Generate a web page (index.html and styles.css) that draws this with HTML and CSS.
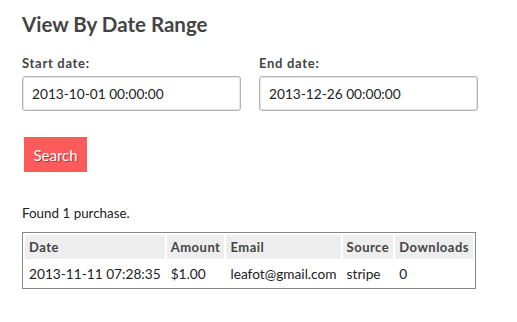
FILE: index.html
```html
<!DOCTYPE html>
<html lang="en">
<head>
  <meta charset="UTF-8" />
  <title>View By Date Range</title>
  <link rel="stylesheet" href="styles.css">
</head>
<body>
  <div class="page">
    <h1>View By Date Range</h1>
    <form class="range-form">
      <div class="fields">
        <div class="field">
          <label for="start">Start date:</label>
          <input type="text" id="start" value="2013-10-01 00:00:00" />
        </div>
        <div class="field">
          <label for="end">End date:</label>
          <input type="text" id="end" value="2013-12-26 00:00:00" />
        </div>
      </div>
      <button type="button" class="search">Search</button>
    </form>

    <p class="found">Found 1 purchase.</p>

    <table class="purchases">
      <thead>
        <tr>
          <th>Date</th>
          <th>Amount</th>
          <th>Email</th>
          <th>Source</th>
          <th>Downloads</th>
        </tr>
      </thead>
      <tbody>
        <tr>
          <td>2013-11-11 07:28:35</td>
          <td>$1.00</td>
          <td>leafot@gmail.com</td>
          <td>stripe</td>
          <td>0</td>
        </tr>
      </tbody>
    </table>
  </div>
</body>
</html>
```
FILE: styles.css
```css
body {
  margin: 0;
  font-family: Lato, 'Open Sans', sans-serif;
  color: #222;
  background: #fff;
}
.page {
  padding: 12px 22px;
}
h1 {
  margin: 0 0 19px;
  font-size: 20.5px;
  line-height: 1.2;
  color: #444;
}
.fields {
  display: flex;
  gap: 18px;
}
.field label {
  display: block;
  font-size: 13px;
  font-weight: bold;
  letter-spacing: 0.7px;
  line-height: 1.2;
  color: #444;
  margin-bottom: 5px;
}
.field input {
  box-sizing: border-box;
  width: 219px;
  height: 35px;
  padding: 0 9px;
  font-family: Lato, sans-serif;
  font-size: 13.7px;
  color: #222;
  border: 1px solid #b4b4b4;
  border-radius: 3px;
  box-shadow: inset 0 0 0 1px #e6e6e6;
}
.search {
  margin: 26px 0 0 2px;
  width: 63px;
  height: 35px;
  border: none;
  background: #fc5b5b;
  color: #fff;
  font-family: Lato, sans-serif;
  font-size: 15px;
  text-shadow: 1px 1px 0 #b83a3a;
  cursor: pointer;
}
.found {
  margin: 33px 0 11px;
  font-size: 13.4px;
  line-height: 1.2;
}
.purchases {
  border: 1px solid #888;
  border-spacing: 2px;
  font-size: 13.7px;
}
.purchases th {
  background: #eee;
  text-align: left;
  font-size: 13px;
  letter-spacing: 0.5px;
  color: #444;
  padding: 4px 4px;
  height: 24px;
  box-sizing: border-box;
}
.purchases td {
  padding: 4px 4px;
  height: 25px;
  box-sizing: border-box;
}
```
